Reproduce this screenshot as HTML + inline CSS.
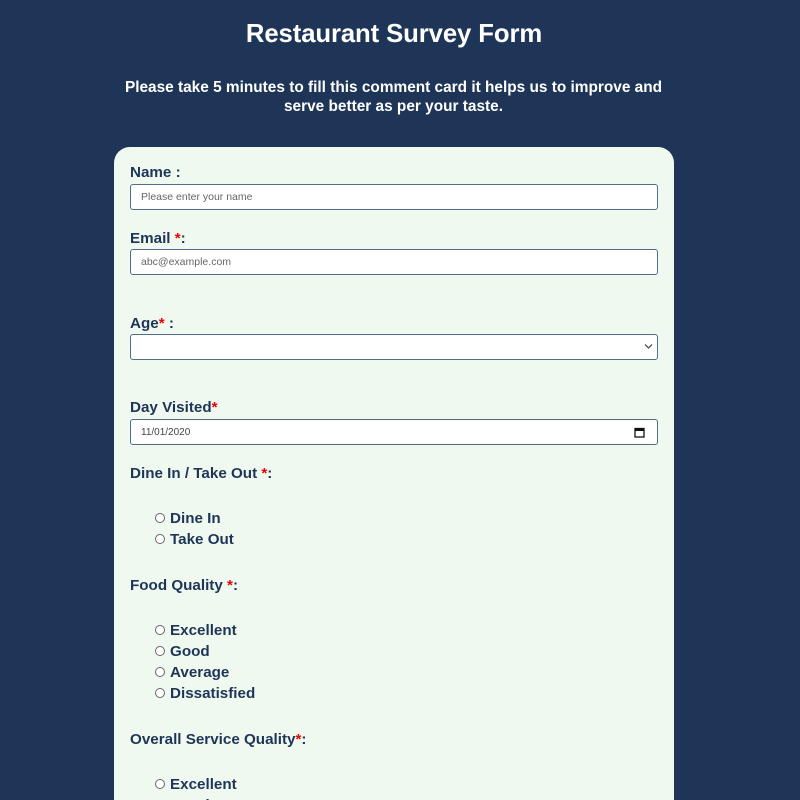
<!DOCTYPE html>
<html><head><meta charset="utf-8"><style>
*{margin:0;padding:0;box-sizing:border-box}
html,body{width:800px;height:800px;overflow:hidden}
body{background:#1e3557;font-family:"Liberation Sans",Arial,sans-serif;position:relative}
.a{position:absolute}
h1{position:absolute;top:20px;left:0;width:788px;text-align:center;color:#fff;font-size:25.7px;font-weight:bold;letter-spacing:-0.1px}
.sub{top:78px;left:0;width:787px;text-align:center;color:#fff;font-size:15.4px;font-weight:bold;line-height:19px}
.card{left:114px;top:147px;width:560px;height:653px;background:#eff9ef;border-radius:16px 16px 0 0}
.lbl{left:130px;color:#1e3557;font-size:15.2px;font-weight:bold;line-height:18px}
.r{color:#e00}
.in{left:130px;width:528px;height:26px;background:#fff;border:1px solid #4f6e8a;border-radius:3px;font-size:10.5px;color:#666;padding:6px 10px;line-height:13px}
.rad{left:155px;color:#1e3557;font-size:15.2px;font-weight:bold;line-height:18px}
.rad i{display:inline-block;width:10px;height:10px;border:1px solid #666;border-radius:50%;background:#fff;margin-right:5px;vertical-align:0px}
</style></head><body>
<h1>Restaurant Survey Form</h1>
<div class="a sub">Please take 5 minutes to fill this comment card it helps us to improve and<br>serve better as per your taste.</div>
<div class="a card"></div>
<div class="a lbl" style="top:164px">Name :</div>
<div class="a in" style="top:184px">Please enter your name</div>
<div class="a lbl" style="top:230px">Email <span class="r">*</span>:</div>
<div class="a in" style="top:249px">abc@example.com</div>
<div class="a lbl" style="top:315px">Age<span class="r">*</span> :</div>
<div class="a in" style="top:334px"><svg class="a" style="right:4px;top:8px" width="9" height="7" viewBox="0 0 9 7"><path d="M1 1.5l3.5 3.5 3.5-3.5" fill="none" stroke="#555" stroke-width="1.3"/></svg></div>
<div class="a lbl" style="top:399px">Day Visited<span class="r">*</span></div>
<div class="a in" style="top:419px;color:#444;font-size:10px">11/01/2020<svg class="a" style="right:12px;top:7px" width="11" height="11" viewBox="0 0 11 11"><rect x="1" y="1.5" width="9" height="8.5" fill="none" stroke="#111" stroke-width="1.3"/><rect x="1" y="1.5" width="9" height="2.5" fill="#111"/></svg></div>
<div class="a lbl" style="top:465px">Dine In / Take Out <span class="r">*</span>:</div>
<div class="a rad" style="top:510px"><i></i>Dine In</div>
<div class="a rad" style="top:531px"><i></i>Take Out</div>
<div class="a lbl" style="top:577px">Food Quality <span class="r">*</span>:</div>
<div class="a rad" style="top:622px"><i></i>Excellent</div>
<div class="a rad" style="top:643px"><i></i>Good</div>
<div class="a rad" style="top:664px"><i></i>Average</div>
<div class="a rad" style="top:685px"><i></i>Dissatisfied</div>
<div class="a lbl" style="top:731px">Overall Service Quality<span class="r">*</span>:</div>
<div class="a rad" style="top:776px"><i></i>Excellent</div>
<div class="a rad" style="top:797px"><i></i>Good</div>
</body></html>
